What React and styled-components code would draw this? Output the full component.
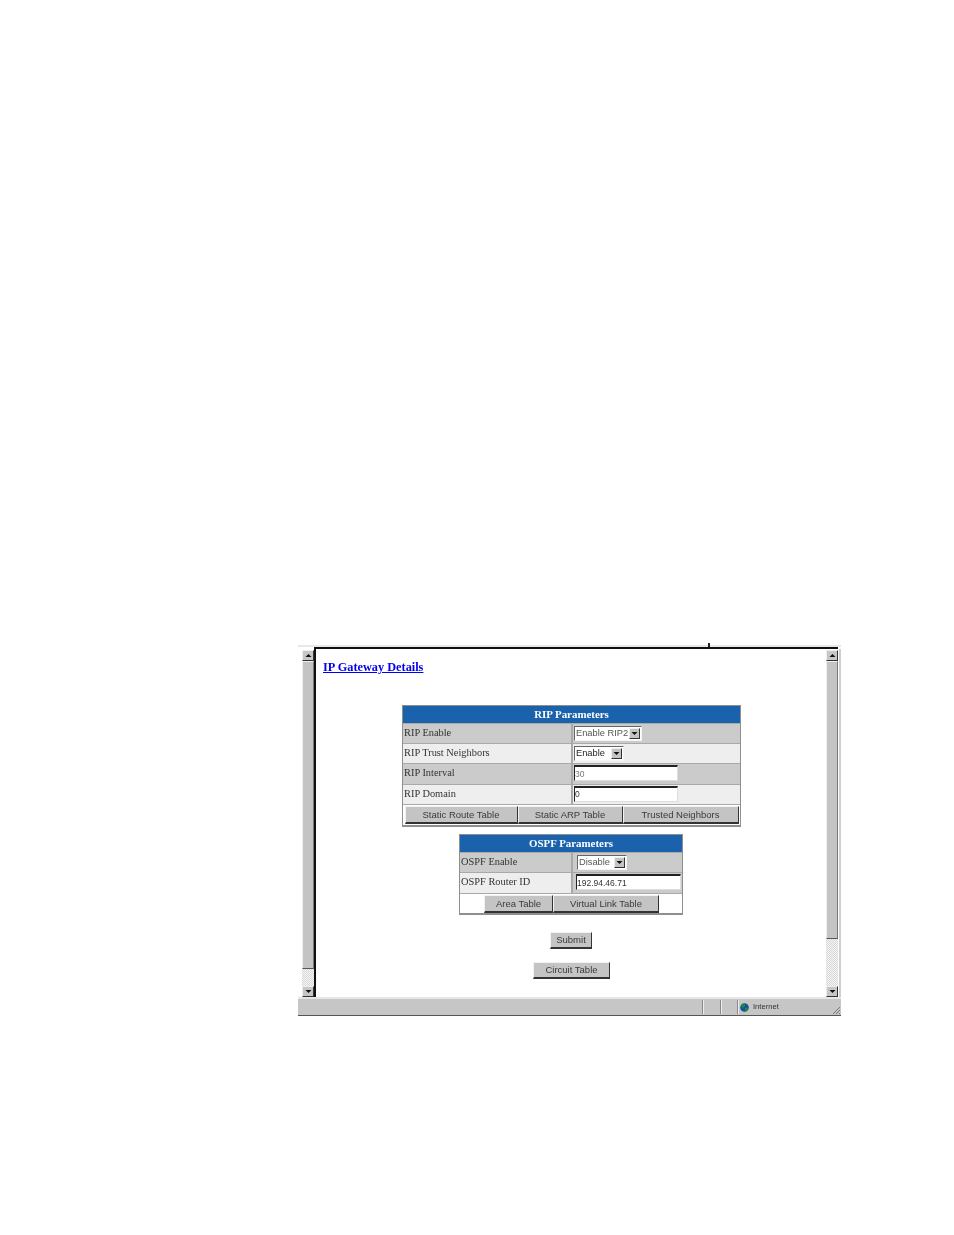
import React from "react";
import styled, { createGlobalStyle } from "styled-components";

const Global = createGlobalStyle`
  html, body { margin: 0; padding: 0; background: #fff; }
  body { width: 954px; height: 1235px; overflow: hidden; }
`;
const Page = styled.div`
  padding: 643px 0 0 298px;
`;
const Win = styled.div`
  position: relative;
  width: 543px;
  height: 373px;
  display: flex;
  flex-direction: column;
  filter: blur(0.4px);
`;
const Tick = styled.span`
  position: absolute;
  left: 410px;
  top: 0;
  width: 2px;
  height: 4px;
  background: #222;
`;
const TopStrip = styled.div`
  height: 4px;
  flex: none;
  box-sizing: border-box;
  border-bottom: 2px solid #e8e8e8;
`;
const Rule = styled.div`
  height: 2px;
  flex: none;
  margin: 0 3px 0 16px;
  background: #111;
`;
const Body = styled.div`
  flex: 1;
  min-height: 0;
  display: flex;
  padding: 0 1px 0 4px;
  background: #fff;
  border-right: 2px solid #cfcfcf;
`;
const Bar = styled.div`
  width: 12px;
  display: flex;
  flex-direction: column;
  padding-top: 1px;
  box-sizing: border-box;
`;
const ArrowBtn = styled.div`
  height: 11px;
  flex: none;
  background: #c6c6c6;
  border: 1px solid;
  border-color: #eee #333 #333 #eee;
  box-sizing: border-box;
  display: flex;
  align-items: center;
  justify-content: center;
`;
const Thumb = styled.div`
  flex: 1;
  background: #c4c4c4;
  border: 1px solid;
  border-color: #eee #777 #555 #eee;
  box-sizing: border-box;
`;
const Track = styled.div`
  height: ${p => p.$h}px;
  flex: none;
  background: repeating-conic-gradient(#d8d8d8 0 25%, #f4f4f4 0 50%) 0 0 / 2px 2px;
`;
const Main = styled.div`
  flex: 1;
  min-width: 0;
  padding-left: 1px;
  border-left: 2px solid #111;
  background: #fff;
  display: flex;
  flex-direction: column;
  align-items: center;
  box-sizing: border-box;
`;
const Title = styled.a`
  align-self: flex-start;
  margin: 11px 0 30px 6px;
  font: bold 12.3px/15px "Liberation Serif", serif;
  color: #0000ee;
  text-decoration: underline;
`;
const Panel = styled.div`
  width: ${p => p.$w}px;
  box-sizing: border-box;
  border: 1px solid #8f8f8f;
  border-bottom-width: 2px;
  background: #a9a9a9;
  margin-bottom: ${p => p.$mb}px;
  margin-right: ${p => p.$mr || 0}px;
  display: flex;
  flex-direction: column;
  gap: 1px;
`;
const Head = styled.div`
  height: 17px;
  background: #1a62ac;
  color: #fff;
  text-align: center;
  font: bold 10.9px/16px "Liberation Serif", serif;
`;
const Row = styled.div`
  height: ${p => p.$h}px;
  display: grid;
  grid-template-columns: ${p => p.$label}px 1fr;
  gap: 2px;
`;
const Label = styled.div`
  background: ${p => (p.$alt ? "#eeeeee" : "#cbcbcb")};
  color: #333;
  padding-left: 1px;
  font: 10.4px/${p => p.$h - 2}px "Liberation Serif", serif;
  white-space: nowrap;
`;
const Value = styled.div`
  background: ${p => (p.$alt ? "#eeeeee" : "#cbcbcb")};
  display: flex;
  align-items: center;
  padding: 0 0 2px ${p => p.$pl || 1}px;
`;
const Select = styled.div`
  width: ${p => p.$w}px;
  height: 15px;
  margin-top: 2px;
  box-sizing: border-box;
  display: flex;
  align-items: center;
  justify-content: space-between;
  background: #fff;
  border: 1px solid;
  border-color: #666 #f4f4f4 #f4f4f4 #666;
  padding: 0 1px 0 1px;
  font: 9.3px/13px "Liberation Sans", sans-serif;
  white-space: nowrap;
  color: ${p => p.$c || "#555"};
`;
const Caret = styled.span`
  width: 11px;
  height: 11px;
  flex: none;
  box-sizing: border-box;
  background: #c4c4c4;
  border: 1px solid;
  border-color: #eee #333 #333 #eee;
  display: flex;
  align-items: center;
  justify-content: center;
`;
const Input = styled.input`
  width: ${p => p.$w}px;
  height: 16px;
  box-sizing: border-box;
  border: 1px solid;
  border-color: #222 #ddd #ddd #222;
  border-top-width: 2px;
  background: #fff;
  padding: 0;
  outline: none;
  font: 8.5px/12px "Liberation Sans", sans-serif;
  color: ${p => p.$c || "#333"};
`;
const BtnRow = styled.div`
  background: #fff;
  height: ${p => p.$h}px;
  display: flex;
  justify-content: center;
  align-items: flex-start;
  padding: 1px 0 0 ${p => p.$pl || 0}px;
  box-sizing: border-box;
`;
const Btn = styled.button`
  width: ${p => p.$w}px;
  height: 18px;
  padding: 0;
  box-sizing: border-box;
  background: #c4c4c4;
  border: 1px solid;
  border-color: #f2f2f2 #333 #333 #f2f2f2;
  border-width: 1px 1px 2px 1px;
  color: #3a3a3a;
  font: 9.5px/14px "Liberation Sans", sans-serif;
`;
const PageBtn = styled(Btn)`
  height: 17px;
  margin-bottom: ${p => p.$mb || 0}px;
  margin-right: ${p => p.$mr || 0}px;
`;
const Status = styled.div`
  height: 19px;
  flex: none;
  display: flex;
  background: #c6c6c6;
  border-top: 2px solid #e6e6e6;
  border-bottom: 1px solid #555;
  box-sizing: border-box;
  font: 7.6px/16px "Liberation Sans", sans-serif;
  color: #333;
`;
const Fill = styled.div`
  flex: 1;
`;
const Cell = styled.div`
  width: ${p => p.$w}px;
  margin: 1px 0;
  border-left: 1px solid #888;
  box-shadow: inset 1px 0 0 #eee;
  display: flex;
  align-items: center;
  gap: 4px;
  padding-left: 2px;
  box-sizing: border-box;
`;
const Grip = styled.svg`
  width: 9px;
  height: 16px;
  flex: none;
  display: block;
`;
const Up = () => (
  <svg width="7" height="5" viewBox="0 0 7 5"><path d="M3.5 1 L6.5 4 H0.5 Z" fill="#111" /></svg>
);
const Down = () => (
  <svg width="7" height="5" viewBox="0 0 7 5"><path d="M0.5 1 H6.5 L3.5 4 Z" fill="#111" /></svg>
);
const Globe = () => (
  <svg width="9" height="9" viewBox="0 0 9 9">
    <circle cx="4.5" cy="4.5" r="4.3" fill="#1650a0" />
    <path d="M2 1 L5.5 0.5 L5 3.5 L2.5 5 L1 3 Z M5 5 L8.5 4.5 L7 8 L5 8.5 Z" fill="#1f8a3a" />
  </svg>
);
const ScrollBar = ({ track }) => (
  <Bar>
    <ArrowBtn><Up /></ArrowBtn>
    <Thumb />
    <Track $h={track} />
    <ArrowBtn><Down /></ArrowBtn>
  </Bar>
);

export default function App() {
  return (
    <Page>
      <Global />
      <Win>
        <Tick />
        <TopStrip />
        <Rule />
        <Body>
          <ScrollBar track={17} />
          <Main>
            <Title href="#">IP Gateway Details</Title>
            <Panel $w={339} $mb={7}>
              <Head>RIP Parameters</Head>
              <Row $h={19} $label={168}>
                <Label $h={19}>RIP Enable</Label>
                <Value><Select $w={68}>Enable RIP2<Caret><Down /></Caret></Select></Value>
              </Row>
              <Row $h={19} $label={168}>
                <Label $h={19} $alt>RIP Trust Neighbors</Label>
                <Value $alt><Select $w={50} $c="#222">Enable<Caret><Down /></Caret></Select></Value>
              </Row>
              <Row $h={20} $label={168}>
                <Label $h={20}>RIP Interval</Label>
                <Value><Input $w={104} $c="#777" readOnly value="30" /></Value>
              </Row>
              <Row $h={19} $label={168}>
                <Label $h={19} $alt>RIP Domain</Label>
                <Value $alt><Input $w={104} readOnly value="0" /></Value>
              </Row>
              <BtnRow $h={20}>
                <Btn $w={113}>Static Route Table</Btn>
                <Btn $w={105}>Static ARP Table</Btn>
                <Btn $w={116}>Trusted Neighbors</Btn>
              </BtnRow>
            </Panel>
            <Panel $w={224} $mb={17} $mr={1}>
              <Head>OSPF Parameters</Head>
              <Row $h={19} $label={111}>
                <Label $h={19}>OSPF Enable</Label>
                <Value $pl={4}><Select $w={50}>Disable<Caret><Down /></Caret></Select></Value>
              </Row>
              <Row $h={20} $label={111}>
                <Label $h={20} $alt>OSPF Router ID</Label>
                <Value $pl={3}><Input $w={105} readOnly value="192.94.46.71" /></Value>
              </Row>
              <BtnRow $h={19} $pl={1}>
                <Btn $w={69}>Area Table</Btn>
                <Btn $w={106}>Virtual Link Table</Btn>
              </BtnRow>
            </Panel>
            <PageBtn $w={42} $mb={13} $mr={1}>Submit</PageBtn>
            <PageBtn $w={77}>Circuit Table</PageBtn>
          </Main>
          <ScrollBar track={47} />
        </Body>
        <Status>
          <Fill />
          <Cell $w={18} />
          <Cell $w={17} />
          <Cell $w={95}><Globe />Internet</Cell>
          <Grip viewBox="0 0 9 16">
            <path d="M1 15 L8 8 M4 15 L8 11 M7 15 L8 14" stroke="#777" strokeWidth="1" fill="none" />
          </Grip>
        </Status>
      </Win>
    </Page>
  );
}
